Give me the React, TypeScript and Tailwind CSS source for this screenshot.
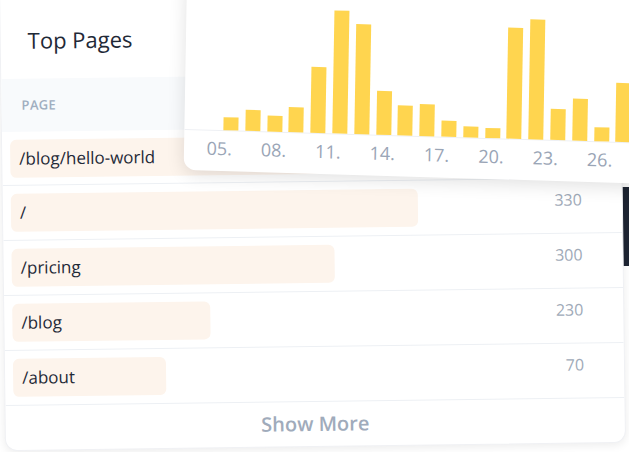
const pages = [
  { path: "/blog/hello-world", value: "", bar: 520 },
  { path: "/", value: "330", bar: 407 },
  { path: "/pricing", value: "300", bar: 323 },
  { path: "/blog", value: "230", bar: 198 },
  { path: "/about", value: "70", bar: 153 },
];

const visits = [13, 21, 16, 25, 66, 123, 110, 44, 30, 32, 16, 11, 10, 111, 120, 31, 42, 14, 59, 40, 20];
const days = ["05.", "08.", "11.", "14.", "17.", "20.", "23.", "26."];

const App = () => {
  return (
    <div className="relative w-[629px] h-[452px] overflow-hidden bg-white font-['Open_Sans',sans-serif]">
      {/* dark card peeking out behind */}
      <div className="absolute left-[616px] top-[187px] w-[30px] h-[79px] bg-[#1e2533]" />

      {/* Top Pages card */}
      <div className="relative ml-[2px] mt-[-20px] w-[621px] h-[467px] rounded-xl bg-white shadow-[0_2px_10px_rgba(0,0,0,0.08)] border border-[#f0f1f4] [transform:rotate(-0.75deg)] overflow-hidden">
        <div className="h-[94px] pt-[16px] pl-[27px] flex items-center text-[22px] text-[#1f2937]">
          Top Pages
        </div>
        <div className="h-[53px] bg-[#f8fafc] flex items-center pl-[20px] text-[13px] font-semibold tracking-wide text-[#a0aec0]">
          PAGE
        </div>

        {pages.map((p, i) => (
          <div
            key={p.path}
            className={`relative flex items-center justify-between pr-[40px] border-[#edf0f4] ${i === 0 ? "h-[53px]" : "h-[55px] border-t"}`}
          >
            <div className="relative ml-[8px] h-[38px] flex items-center">
              <div className="absolute left-0 top-0 h-[38px] rounded-md bg-[#fdf4ec]" style={{ width: p.bar }} />
              <span className="relative pl-[9px] text-[17px] text-[#1f2937]">{p.path}</span>
            </div>
            <span className="pb-[12px] text-[16px] text-[#a0aab8]">{p.value}</span>
          </div>
        ))}

        <div className="h-[47px] pb-[3px] border-t border-[#edf0f4] flex items-center justify-center text-[20px] font-semibold text-[#a0abbb]">
          Show More
        </div>
      </div>

      {/* visits chart card */}
      <div className="absolute left-[187px] top-[-22px] w-[480px] h-[192px] rounded-xl bg-white shadow-[0_4px_18px_rgba(0,0,0,0.12)] origin-top-left [transform:rotate(1deg)_skewY(0.7deg)] overflow-hidden">
        <div className="h-[152px] flex items-end gap-[6.8px] pl-[39px] border-b border-[#eef0f4]">
          {visits.map((v, i) => (
            <div key={i} className="w-[15px] shrink-0 bg-[#ffd54f]" style={{ height: v }} />
          ))}
        </div>
        <div className="flex pl-[8px] mt-[5px]">
          {days.map((d) => (
            <div key={d} className="w-[54.36px] shrink-0 text-center text-[18px] leading-[24px] text-[#9aa5b6]">
              {d}
            </div>
          ))}
        </div>
      </div>
    </div>
  );
};

export default App;
